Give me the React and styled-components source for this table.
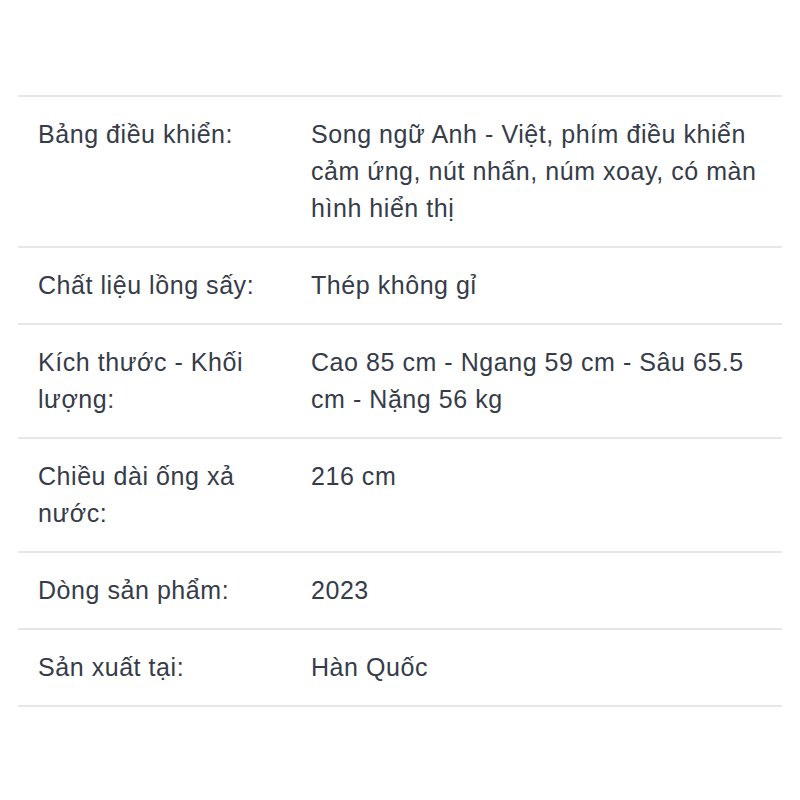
import React from 'react';
import styled, {createGlobalStyle} from 'styled-components';

const GlobalStyle = createGlobalStyle`
  body {
    margin: 0;
    background: #ffffff;
    font-family: "Liberation Sans", Arial, sans-serif;
  }
`

const specs = [
    {label: 'Bảng điều khiển:', value: 'Song ngữ Anh - Việt, phím điều khiển cảm ứng, nút nhấn, núm xoay, có màn hình hiển thị'},
    {label: 'Chất liệu lồng sấy:', value: 'Thép không gỉ'},
    {label: 'Kích thước - Khối lượng:', value: 'Cao 85 cm - Ngang 59 cm - Sâu 65.5 cm - Nặng 56 kg'},
    {label: 'Chiều dài ống xả nước:', value: '216 cm'},
    {label: 'Dòng sản phẩm:', value: '2023'},
    {label: 'Sản xuất tại:', value: 'Hàn Quốc'},
]

const App = () => {
    return (
        <Page>
            <GlobalStyle/>
            <SpecTable>
                {specs.map(item => (
                    <Row key={item.label}>
                        <Label>{item.label}</Label>
                        <Value>{item.value}</Value>
                    </Row>
                ))}
            </SpecTable>
        </Page>
    );
};

const Page = styled.main`
  padding: 95px 18px 40px;
`
const SpecTable = styled.div`
  border-top: 2px solid #e6e6e8;
`
const Row = styled.div`
  display: grid;
  grid-template-columns: 233px 1fr;
  column-gap: 40px;
  padding: 19px 20px 19px;
  border-bottom: 2px solid #e6e6e8;
  font-size: 25px;
  letter-spacing: 0.55px;
  line-height: 37px;
  color: #363c49;
`
const Label = styled.div``
const Value = styled.div``

export default App;
